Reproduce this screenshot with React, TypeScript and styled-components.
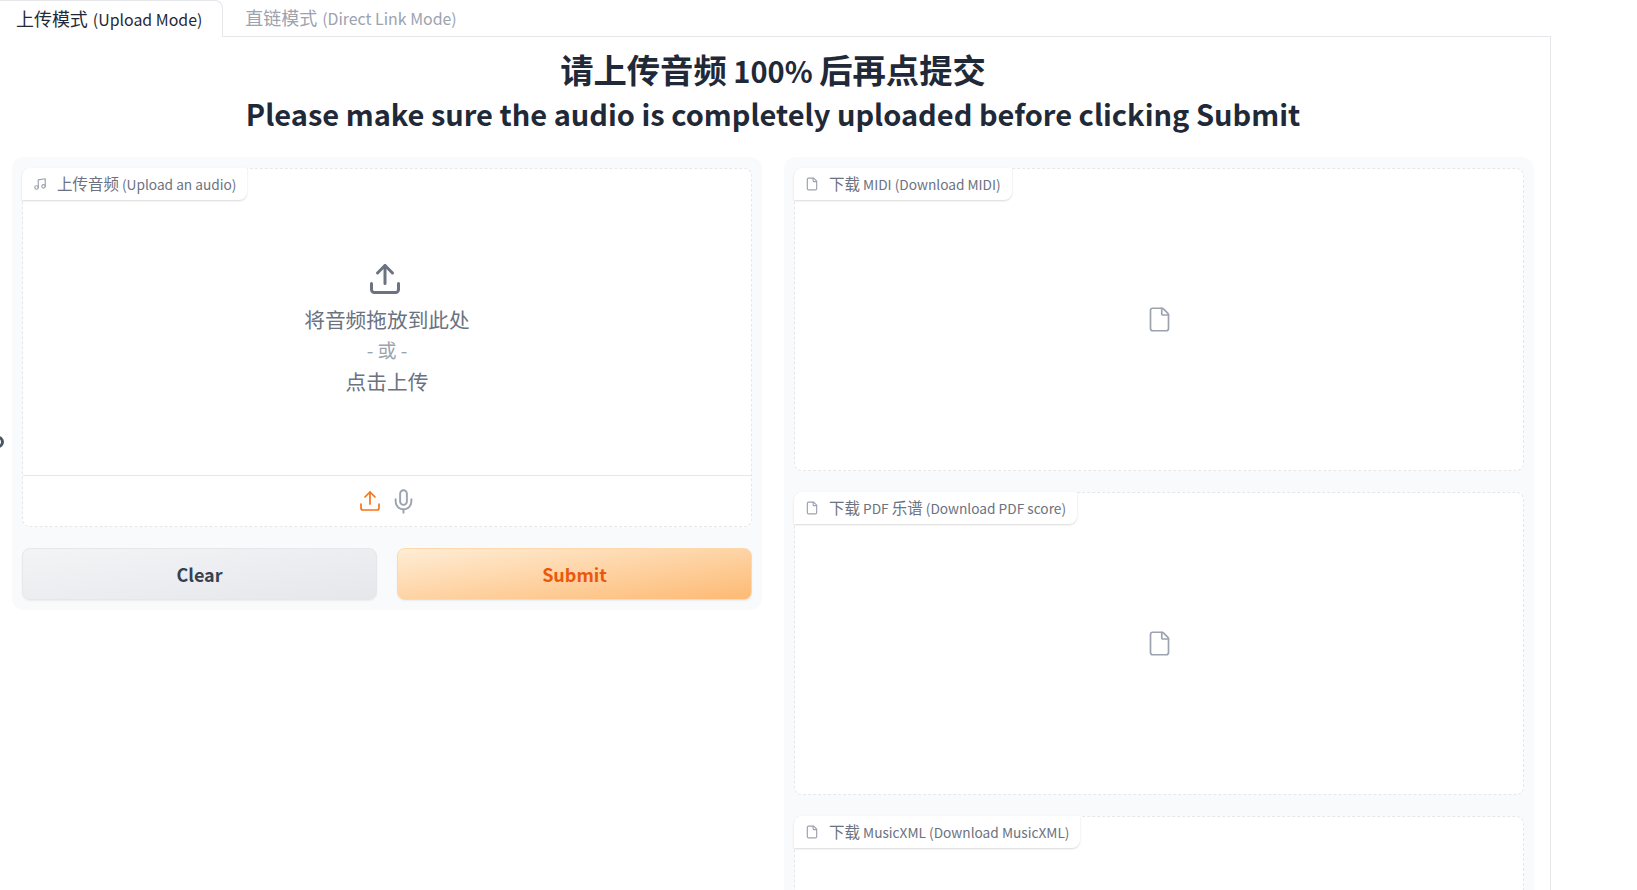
import React from 'react'
import styled, { createGlobalStyle } from 'styled-components'
import { File, Mic, Music, Upload } from 'lucide-react'

const GlobalStyle = createGlobalStyle`
  html, body {
    margin     : 0;
    height     : 100%;
    overflow   : hidden;
    background : #fff;
    font-family: "Noto Sans CJK SC", "Noto Sans", sans-serif;
  }
  * { box-sizing: border-box; }
`

const Page = styled.div`
  width   : 1551px;
  height  : 890px;
  overflow: hidden;
`
const Zh = styled.span<{ $scale?: number }>`
  font-size  : ${ (p) => p.$scale ?? 1.13 }em;
  line-height: 1;
`
const TabBar = styled.div`
  display      : flex;
  height       : 37px;
  border-bottom: 1px solid #e5e7eb;
`
const Tab = styled.div<{ $active?: boolean }>`
  display      : flex;
  align-items  : center;
  gap          : 5px;
  height       : ${ (p) => (p.$active ? '37px' : '36px') };
  padding-left : ${ (p) => (p.$active ? '16px' : '22px') };
  padding-right: 20px;
  font-size    : 15.9px;
  color        : ${ (p) => (p.$active ? '#1f2937' : '#9ca3af') };
  background   : #fff;
  border-radius: 0 8px 0 0;
  border-top   : ${ (p) => (p.$active ? '1px solid #e5e7eb' : 'none') };
  border-right : ${ (p) => (p.$active ? '1px solid #e5e7eb' : 'none') };
`
const TabBody = styled.div`
  border-right: 1px solid #e5e7eb;
  padding     : 12px 16px 0 12px;
  height      : 853px;
`
const Heading = styled.h1`
  margin     : 0;
  text-align : center;
  font-size  : 29px;
  line-height: 43px;
  font-weight: 600;
  color      : #1f2937;
`
const Columns = styled.div`
  display    : flex;
  gap        : 22px;
  margin-top : 22px;
  align-items: flex-start;
`
const Panel = styled.div`
  flex          : 1;
  display       : flex;
  flex-direction: column;
  gap           : 21px;
  padding       : 11px 10px 10px;
  background    : #f9fafb;
  border-radius : 12px;
`
const Block = styled.div<{ $height?: number }>`
  position      : relative;
  display       : flex;
  flex-direction: column;
  height        : ${ (p) => p.$height ?? 303 }px;
  flex-shrink   : 0;
  background    : #fff;
  border        : 1px dashed #e5e7eb;
  border-radius : 8px;
`
const BlockLabel = styled.div`
  position     : absolute;
  left         : -1px;
  top          : -1px;
  display      : flex;
  align-items  : center;
  gap          : 10px;
  height       : 32px;
  padding      : 0 11px;
  font-size    : 13.7px;
  color        : #6b7280;
  background   : #fff;
  border-radius: 8px 0 8px 0;
  box-shadow   : 0 1px 2px rgba(0, 0, 0, 0.15);
  white-space  : pre;

  svg {
    width : 14px;
    height: 14px;
    color : #9ca3af;
  }
`
const DropZone = styled.div`
  flex           : 1;
  display        : flex;
  flex-direction : column;
  align-items    : center;
  padding-top    : 92px;
  font-size      : 20.7px;
  line-height    : 30.8px;
  color          : #6b7280;
`
const DropIcon = styled(Upload)`
  width        : 36px;
  height       : 36px;
  margin-bottom: 7px;
  margin-left  : -5px;
  stroke-width : 2;
  color        : #6b7280;
`
const OrText = styled.div`
  font-size: 19px;
  color    : #9ca3af;
`
const Toolbar = styled.div`
  display        : flex;
  align-items    : center;
  justify-content: center;
  gap            : 8px;
  height         : 51px;
  border-top     : 1px solid #e5e7eb;
`
const SourceIcon = styled.div<{ $active?: boolean }>`
  display: flex;
  color  : ${ (p) => (p.$active ? '#f97316' : '#9ca3af') };

  svg {
    width : ${ (p) => (p.$active ? 24 : 27) }px;
    height: ${ (p) => (p.$active ? 24 : 27) }px;
    stroke-width: 1.7;
  }
`
const ButtonRow = styled.div`
  display: flex;
  gap    : 20px;
`
const Button = styled.button<{ $primary?: boolean }>`
  flex         : 1;
  height       : 52px;
  font-family  : inherit;
  font-size    : 18px;
  font-weight  : 600;
  color        : ${ (p) => (p.$primary ? '#ea580c' : '#374151') };
  background   : ${ (p) => (p.$primary
    ? 'linear-gradient(to bottom right, #ffedd5, #fdba74)'
    : 'linear-gradient(to bottom right, #f3f4f6, #e5e7eb)') };
  border       : 1px solid ${ (p) => (p.$primary ? '#fed7aa' : '#e5e7eb') };
  border-radius: 8px;
  box-shadow   : 0 1px 2px rgba(0, 0, 0, 0.06);
`
const EmptyFile = styled.div`
  flex           : 1;
  display        : flex;
  align-items    : center;
  justify-content: center;
  color          : #9ca3af;

  svg { width: 27px; height: 27px; stroke-width: 1.5; }
`
const EdgeMark = styled.div`
  position     : absolute;
  left         : -8px;
  top          : 436px;
  width        : 12px;
  height       : 12px;
  border       : 3px solid #4b5563;
  border-radius: 50%;
`

const downloads = [
  { id: 'midi', label: <><Zh>下载</Zh> MIDI (Download MIDI)</> },
  { id: 'pdf', label: <><Zh>下载</Zh> PDF <Zh>乐谱</Zh> (Download PDF score)</> },
  { id: 'xml', label: <><Zh>下载</Zh> MusicXML (Download MusicXML)</> },
]

export default function App() {
  return (
    <Page>
      <GlobalStyle />
      <EdgeMark />
      <TabBar>
        <Tab $active><Zh>上传模式</Zh>(Upload Mode)</Tab>
        <Tab><Zh>直链模式</Zh>(Direct Link Mode)</Tab>
      </TabBar>
      <TabBody>
        <Heading>
          <Zh $scale={ 1.15 }>请上传音频</Zh> 100% <Zh $scale={ 1.15 }>后再点提交</Zh>
          <br />
          Please make sure the audio is completely uploaded before clicking Submit
        </Heading>
        <Columns>
          <Panel>
            <Block $height={ 359 }>
              <BlockLabel><Music /><span><Zh>上传音频</Zh> (Upload an audio)</span></BlockLabel>
              <DropZone>
                <DropIcon />
                <div>将音频拖放到此处</div>
                <OrText>- 或 -</OrText>
                <div>点击上传</div>
              </DropZone>
              <Toolbar>
                <SourceIcon $active><Upload /></SourceIcon>
                <SourceIcon><Mic /></SourceIcon>
              </Toolbar>
            </Block>
            <ButtonRow>
              <Button>Clear</Button>
              <Button $primary>Submit</Button>
            </ButtonRow>
          </Panel>
          <Panel>
            { downloads.map((item) => (
              <Block key={ item.id }>
                <BlockLabel><File /><span>{ item.label }</span></BlockLabel>
                <EmptyFile><File /></EmptyFile>
              </Block>
            )) }
          </Panel>
        </Columns>
      </TabBody>
    </Page>
  )
}
